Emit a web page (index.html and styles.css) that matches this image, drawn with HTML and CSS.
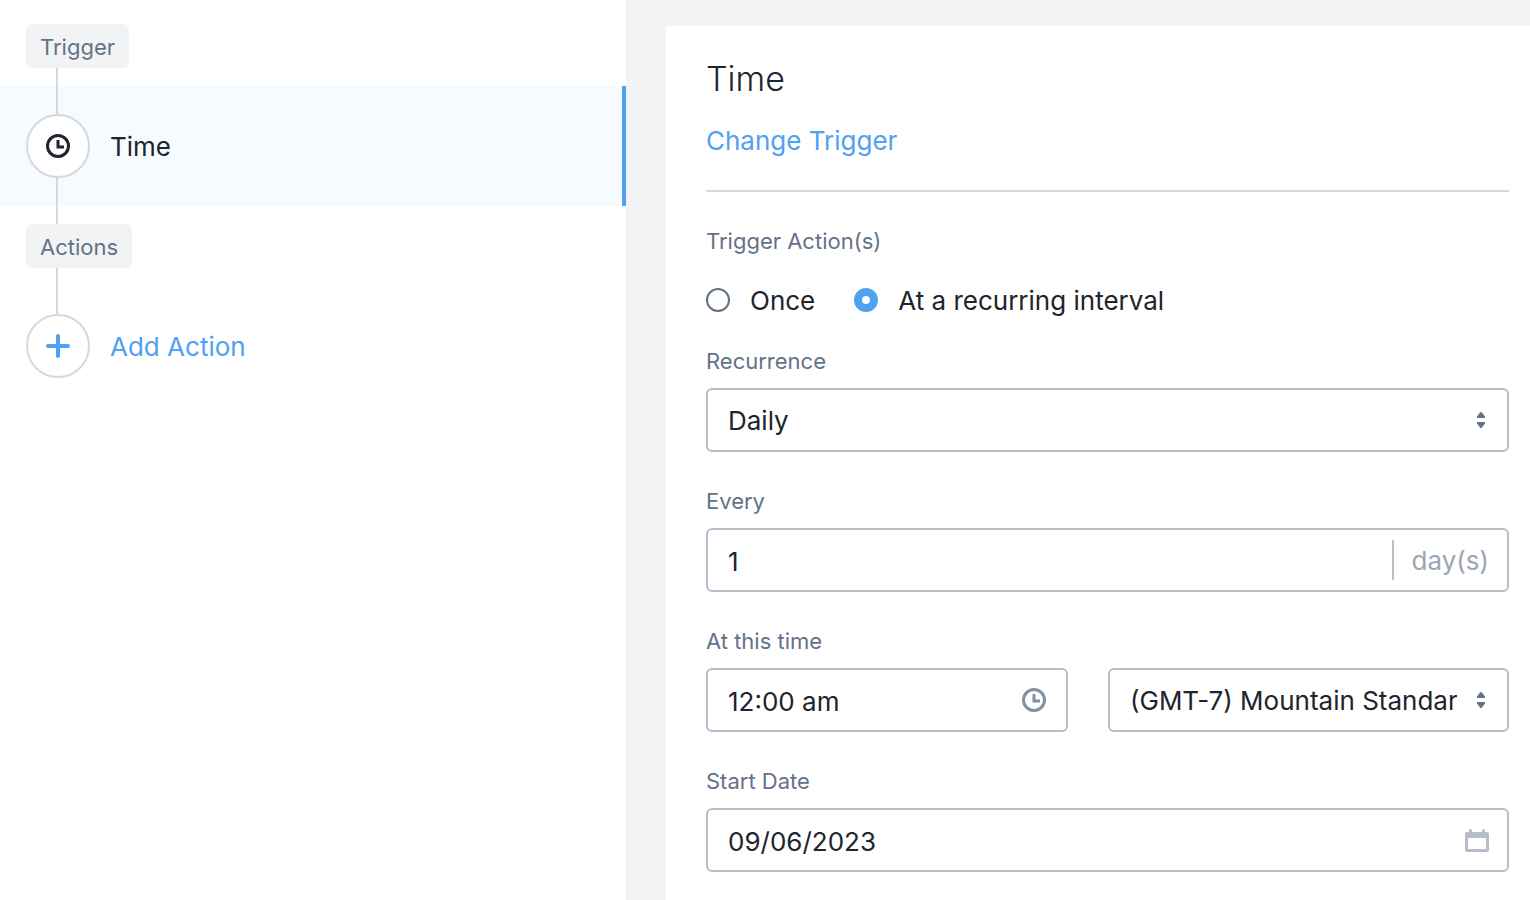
FILE: index.html
```html
<!DOCTYPE html>
<html lang="en">
<head>
  <meta charset="UTF-8" />
  <meta name="viewport" content="width=device-width, initial-scale=1.0"/>
  <title>Time Trigger</title>
  <link rel="stylesheet" href="styles.css">
</head>
<body>

  <div class="layout">
    <nav class="steps">
      <div class="step-group"><span class="tag">Trigger</span></div>
      <a class="step active" href="#time">
        <span class="step-icon">
          <svg width="24" height="24" viewBox="0 0 24 24" fill="none" stroke="currentColor" stroke-width="3">
            <circle cx="12" cy="12" r="10.5"/>
            <path d="M12 6v7h6"/>
          </svg>
        </span>
        <span class="step-name">Time</span>
      </a>
      <div class="step-group"><span class="tag">Actions</span></div>
      <button class="step add" type="button">
        <span class="step-icon">
          <svg width="24" height="24" viewBox="0 0 24 24" fill="none" stroke="currentColor" stroke-width="4" stroke-linecap="round">
            <path d="M12 2v20M2 12h20"/>
          </svg>
        </span>
        <span class="step-name">Add Action</span>
      </button>
    </nav>

    <main class="content">
      <form class="panel" id="time">
        <header class="panel-header">
          <h1>Time</h1>
          <a href="#change">Change Trigger</a>
        </header>

        <fieldset class="radios">
          <legend>Trigger Action(s)</legend>
          <div class="radio-row">
            <label><input type="radio" name="repeat" value="once"> <span>Once</span></label>
            <label><input type="radio" name="repeat" value="recurring" checked> <span>At a recurring interval</span></label>
          </div>
        </fieldset>

        <div class="field">
          <label for="recurrence">Recurrence</label>
          <div class="control">
            <select id="recurrence">
              <option>Daily</option>
              <option>Weekly</option>
              <option>Monthly</option>
            </select>
            <svg class="arrows" width="8" height="16" viewBox="0 0 8 16" fill="currentColor">
              <path d="M0 6V4.600L3 .5Q4-.5 5 .5L8 4.600V6zM0 10v1.400L3 15.500Q4 16.500 5 15.500L8 11.400V10z"/>
            </svg>
          </div>
        </div>

        <div class="field">
          <label for="every">Every</label>
          <div class="control">
            <input type="text" id="every" value="1" inputmode="numeric">
            <span class="suffix">day(s)</span>
          </div>
        </div>

        <div class="field-row">
          <div class="field">
            <label for="atTime">At this time</label>
            <div class="control">
              <input type="text" id="atTime" value="12:00 am">
              <svg class="clock" width="24" height="24" viewBox="0 0 24 24" fill="none" stroke="currentColor" stroke-width="3">
                <circle cx="12" cy="12" r="10.5"/>
                <path d="M12 6v7h6"/>
              </svg>
            </div>
          </div>
          <div class="field">
            <div class="control">
              <select id="timezone" aria-label="Time zone">
                <option>(GMT-7) Mountain Standard Time</option>
              </select>
              <svg class="arrows" width="8" height="16" viewBox="0 0 8 16" fill="currentColor">
                <path d="M0 6V4.600L3 .5Q4-.5 5 .5L8 4.600V6zM0 10v1.400L3 15.500Q4 16.500 5 15.500L8 11.400V10z"/>
              </svg>
            </div>
          </div>
        </div>

        <div class="field">
          <label for="startDate">Start Date</label>
          <div class="control">
            <input type="text" id="startDate" value="09/06/2023">
            <svg class="calendar" width="24" height="24" viewBox="0 0 24 24" fill="currentColor">
              <path fill-rule="evenodd" d="M4 4V2.500a1.500 1.500 0 0 1 3 0V4h10V2.500a1.500 1.500 0 0 1 3 0V4h2a2 2 0 0 1 2 2v16a2 2 0 0 1-2 2H2a2 2 0 0 1-2-2V6a2 2 0 0 1 2-2zM3 10v11h18V10z"/>
            </svg>
          </div>
        </div>
      </form>
    </main>
  </div>

</body>
</html>
```
FILE: styles.css
```css
* {
  box-sizing: border-box;
}
body {
  margin: 0;
  font-family: Inter, "Open Sans", sans-serif;
  font-size: 26px;
  line-height: 32px;
  color: #20242c;
  background: #fff;
}
a {
  color: #4fa1f2;
  text-decoration: none;
}
input, select, button {
  font: inherit;
  color: inherit;
}
.layout {
  display: grid;
  grid-template-columns: 626fr 904fr;
  min-height: 100vh;
}

/* left column */
.steps {
  position: relative;
  padding-top: 6px;
}
.steps::before {
  content: "";
  position: absolute;
  top: 68px;
  left: 56px;
  width: 2px;
  height: 260px;
  background: #d5d8de;
  z-index: 1;
}
.step-group {
  padding: 18px 26px;
}
.tag {
  position: relative;
  z-index: 2;
  display: block;
  width: fit-content;
  padding: 7px 14px 5px;
  border-radius: 6px;
  font-size: 22px;
  color: #647287;
  background: #f2f3f5;
}
.step {
  display: flex;
  align-items: center;
  gap: 20px;
  width: 100%;
  padding: 28px 26px;
  border: 0;
  color: #20242c;
  background: none;
  cursor: pointer;
}
.step.active {
  background: #f5fbff;
  border-right: 4px solid #4fa1f2;
}
.step.add {
  color: #4fa1f2;
}
.step-name, .radio-row span {
  padding-top: 2px;
}
.step-icon {
  position: relative;
  z-index: 2;
  display: grid;
  place-items: center;
  width: 64px;
  height: 64px;
  border: 2px solid #d5d8de;
  border-radius: 50%;
  background: #fff;
}

/* right column */
.content {
  display: grid;
  padding: 26px 0 0 40px;
  background: #f2f3f5;
}
.panel {
  display: flex;
  flex-direction: column;
  gap: 33px;
  padding: 31px 21px 28px 40px;
  background: #fff;
}
.panel-header {
  padding-bottom: 33px;
  border-bottom: 2px solid #d5d8de;
}
h1 {
  margin: 0 0 24px;
  font-size: 34px;
  font-weight: 300;
  line-height: 44px;
}
.radios {
  margin: 0 0 -5px;
  padding: 0;
  border: 0;
}
legend {
  margin-bottom: 26px;
  padding: 0;
  font-size: 22px;
  color: #647287;
}
.radio-row {
  display: flex;
  gap: 39px;
}
.radio-row label {
  display: flex;
  align-items: center;
  gap: 20px;
}
input[type="radio"] {
  appearance: none;
  width: 24px;
  height: 24px;
  margin: 0;
  border: 2px solid #647287;
  border-radius: 50%;
}
input[type="radio"]:checked {
  border: 8px solid #4fa1f2;
}
.field > label {
  display: block;
  margin-bottom: 11px;
  font-size: 22px;
  color: #647287;
}
.field-row {
  display: grid;
  grid-template-columns: 362fr 401fr;
  gap: 40px;
  align-items: end;
}
.control {
  display: grid;
  grid-template-columns: 1fr auto;
  align-items: center;
  height: 64px;
  border: 2px solid #b7bdca;
  border-radius: 6px;
}
.control input, .control select {
  appearance: none;
  grid-area: 1 / 1;
  width: 100%;
  min-width: 0;
  height: 60px;
  padding: 2px 20px 0;
  border: 0;
  outline: 0;
  background: transparent;
}
.control select {
  grid-column: 1 / 3;
  padding-right: 50px;
}
.control svg {
  grid-area: 1 / 2;
  margin-right: 18px;
  pointer-events: none;
}
.control .arrows {
  margin-right: 22px;
  color: #647287;
}
.control .clock {
  margin-right: 20px;
  color: #8290a4;
}
.calendar {
  color: #b7bdca;
}
.suffix {
  padding: 5px 18px 3px;
  border-left: 2px solid #b7bdca;
  color: #9ca5b4;
}
```
